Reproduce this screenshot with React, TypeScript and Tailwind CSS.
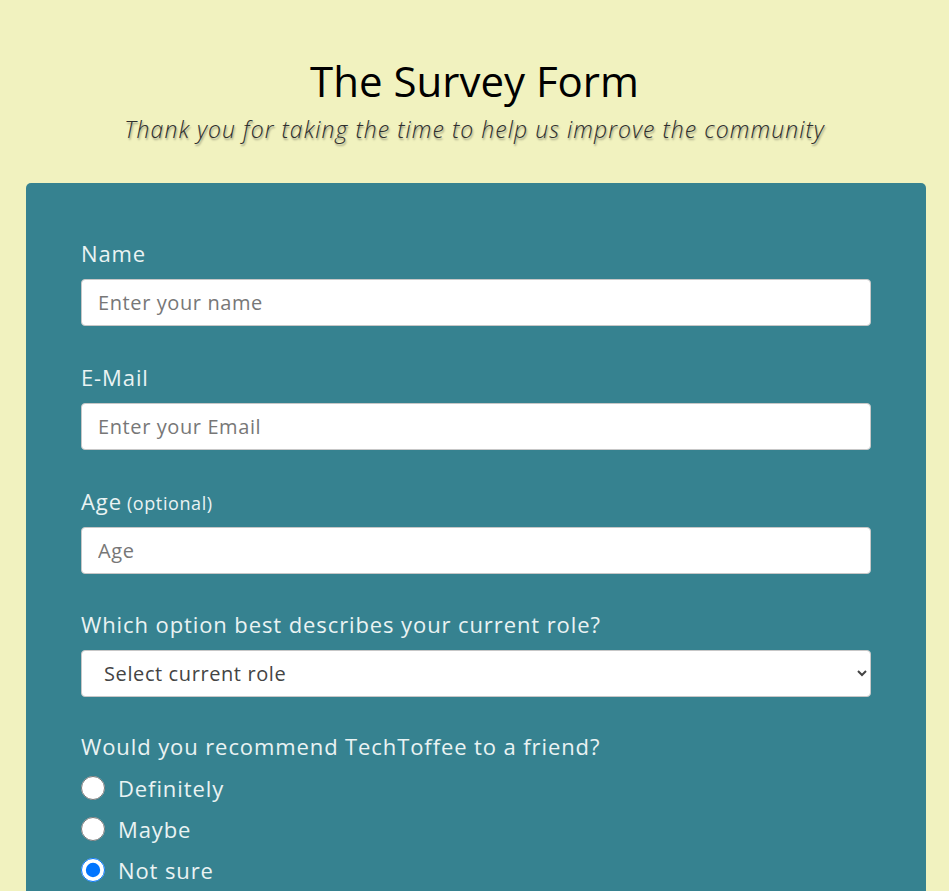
import React from "react";

const font = { fontFamily: "'Open Sans', 'Noto Sans', sans-serif" };

const labelCls = "text-[22px] leading-[30px] tracking-[0.9px] text-[#eaf3f3]";
const fieldCls =
  "mt-[11px] h-[47px] w-full rounded-[4px] border border-[#c7c7c7] bg-white text-[20px] tracking-[0.6px] outline-none";

const TextField = ({
  label,
  hint,
  placeholder,
  type = "text",
}: {
  label: string;
  hint?: string;
  placeholder: string;
  type?: string;
}) => (
  <div className="flex flex-col">
    <label className={`flex h-[30px] items-baseline ${labelCls}`}>
      {label}
      {hint && <span className="ml-[5px] text-[18px] leading-none tracking-[0.6px]">{hint}</span>}
    </label>
    <input
      type={type}
      placeholder={placeholder}
      className={`${fieldCls} px-4 text-[#333] placeholder:text-[#777]`}
      style={font}
    />
  </div>
);

const App = () => {
  return (
    <div className="min-h-screen bg-[#f1f2bf] pt-[55px] pb-10" style={font}>
      {/* Header */}
      <header className="text-center">
        <h1 className="text-[42px] leading-[52px] font-medium text-black">The Survey Form</h1>
        <p className="mt-[6px] text-[23px] leading-[32px] tracking-[1.05px] italic font-light text-[#2e2e2e] [text-shadow:1px_2px_2px_rgba(0,0,0,0.35)]">
          Thank you for taking the time to help us improve the community
        </p>
      </header>

      {/* Form card */}
      <form className="ml-[26px] mt-[38px] w-[900px] rounded-[5px] bg-[#368290] px-[55px] pt-[55px] pb-16">
        <div className="flex flex-col gap-[36px]">
          <TextField label="Name" placeholder="Enter your name" />
          <TextField label="E-Mail" placeholder="Enter your Email" type="email" />
          <TextField label="Age" hint="(optional)" placeholder="Age" type="number" />

          <div className="-mt-[1px] flex flex-col">
            <label className={labelCls}>Which option best describes your current role?</label>
            <select
              className={`${fieldCls} pl-[18px] pr-3 text-[#444]`}
              style={font}
              defaultValue=""
            >
              <option value="" disabled>
                Select current role
              </option>
              <option>Student</option>
              <option>Full Time Job</option>
              <option>Full Time Learner</option>
              <option>Prefer not to say</option>
              <option>Other</option>
            </select>
          </div>

          <div className="-mt-[2px] flex flex-col">
            <p className={labelCls}>Would you recommend TechToffee to a friend?</p>
            <div className="mt-[12px] flex flex-col gap-[11px]">
              {["Definitely", "Maybe", "Not sure"].map((opt) => (
                <label key={opt} className={`flex items-center gap-[13px] ${labelCls}`}>
                  <input
                    type="radio"
                    name="recommend"
                    defaultChecked={opt === "Not sure"}
                    className="m-0 h-6 w-6"
                  />
                  {opt}
                </label>
              ))}
            </div>
          </div>

          <div className="flex flex-col">
            <p className={labelCls}>What would you like to see improved?</p>
            <div className="mt-[11px] flex flex-col gap-[11px]">
              {["Front-end Projects", "Back-end Projects", "Data Visualization", "Challenges"].map((opt) => (
                <label key={opt} className={`flex items-center gap-[13px] ${labelCls}`}>
                  <input type="checkbox" className="m-0 h-5 w-5" />
                  {opt}
                </label>
              ))}
            </div>
          </div>

          <div className="flex flex-col">
            <label className={labelCls}>Any comments or suggestions?</label>
            <textarea
              placeholder="Enter your comment here..."
              className="mt-[11px] h-[120px] w-full rounded-[4px] border border-[#c7c7c7] bg-white px-4 py-3 text-[20px] tracking-[0.6px] placeholder:text-[#777] outline-none"
              style={font}
            />
          </div>

          <button
            type="button"
            className="h-[47px] w-full rounded-[4px] bg-[#f1f2bf] text-[22px] tracking-[0.9px] text-[#222]"
          >
            Submit
          </button>
        </div>
      </form>
    </div>
  );
};

export default App;
